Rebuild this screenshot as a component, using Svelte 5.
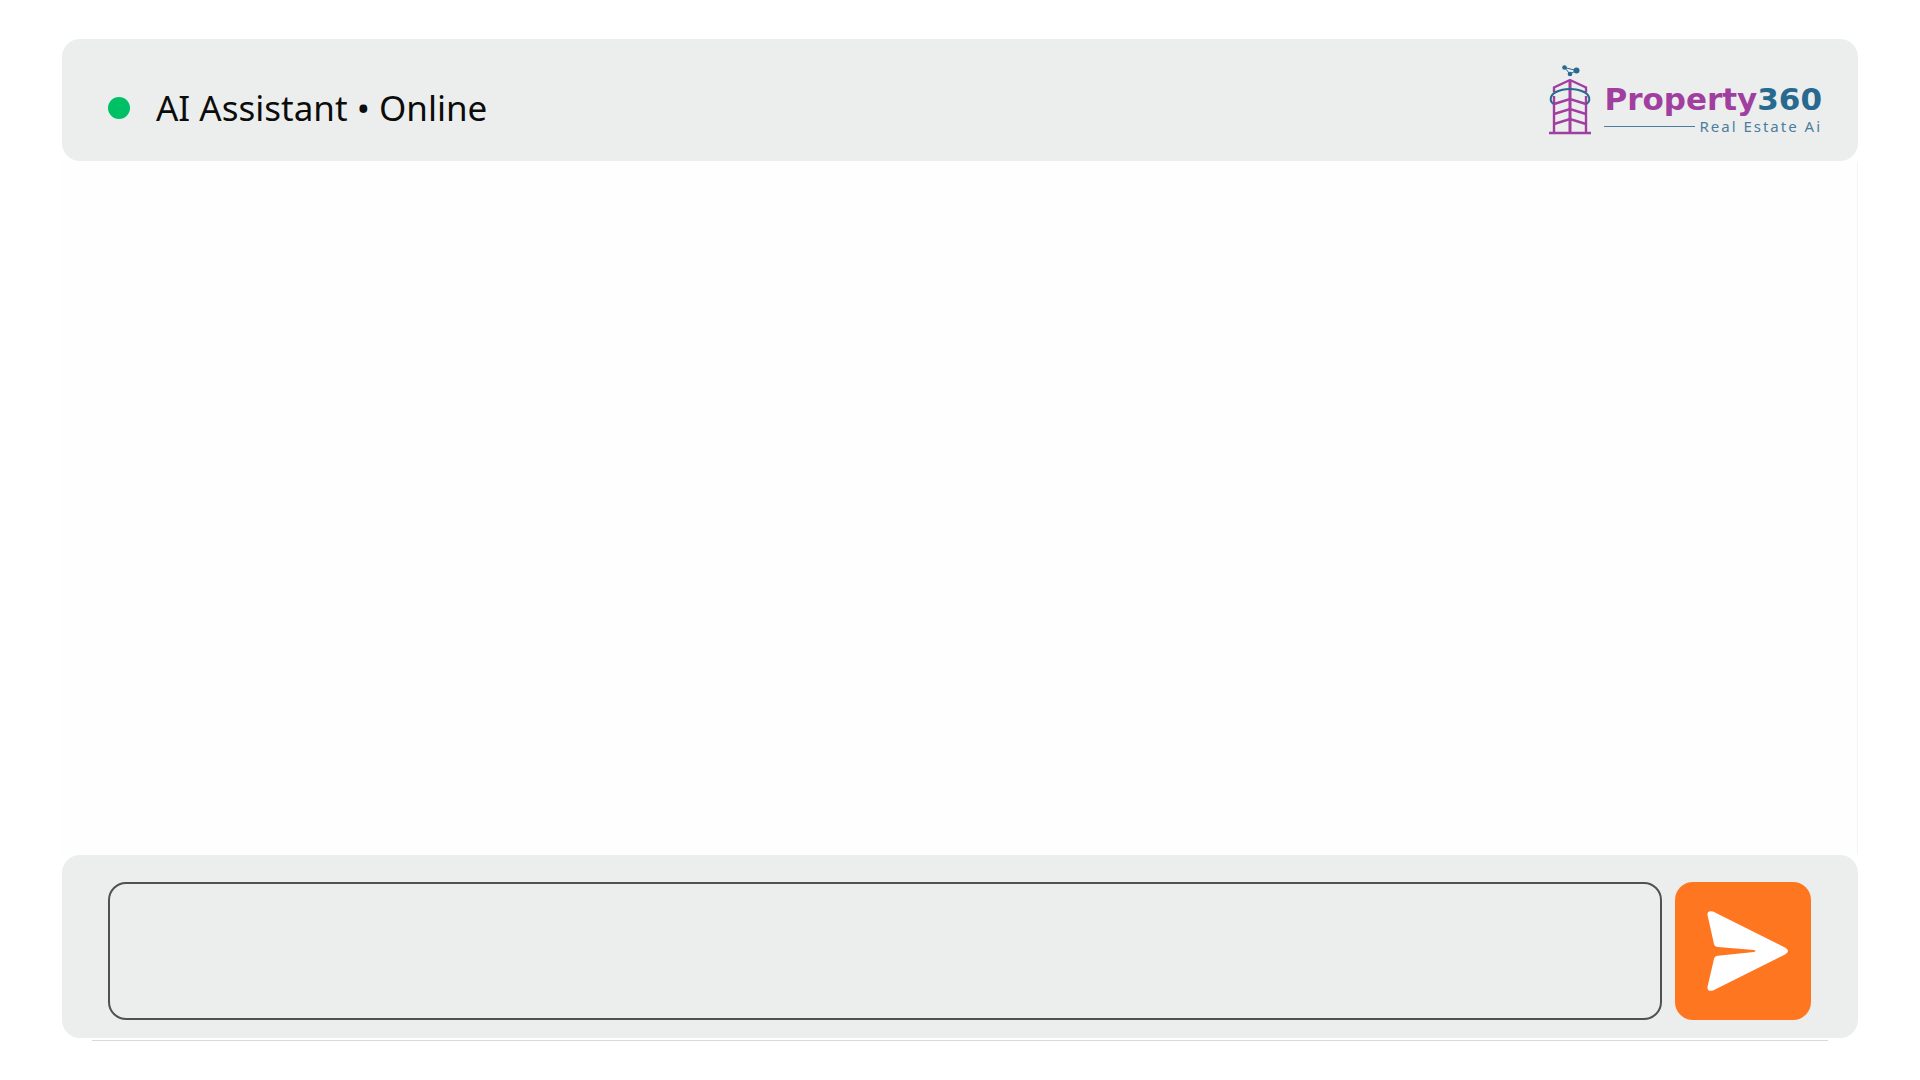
<script lang="ts">
  let message = $state('');

  function send(event: SubmitEvent) {
    event.preventDefault();
    message = '';
  }
</script>

<main class="chat">
  <header class="chat-header">
    <div class="status">
      <span class="status-dot"></span>
      <h1 class="status-text">AI Assistant • Online</h1>
    </div>

    <div class="brand">
      <svg class="brand-icon" viewBox="0 0 44 72" fill="none">
        <g stroke="#a03fa0" stroke-width="2.400">
          <path d="M1 69h42" />
          <path d="M6 69V32M38 69V32" />
          <path d="M6 28V23.500L22 16L38 23.500V28" />
          <path d="M22 16V69" stroke-width="3" />
          <path d="M6 40L22 35L38 40M6 50L22 45L38 50M6 60L22 55L38 60" />
        </g>
        <path
          d="M5.500 40C1 37 2 31 8 28C16 24 28 24 36 28C42 31 43 37 38.500 40"
          stroke="#27698f"
          stroke-width="2"
        />
        <path d="M16.500 3.500L28.500 6.500L22 10Z" stroke="#27698f" />
        <g fill="#27698f">
          <circle cx="16.500" cy="3.500" r="2.300" />
          <circle cx="28.500" cy="6.500" r="3" />
          <circle cx="22" cy="10" r="2.300" />
        </g>
      </svg>
      <div class="brand-text">
        <span class="brand-name">Property<span class="brand-number">360</span></span>
        <span class="brand-tagline">Real Estate Ai</span>
      </div>
    </div>
  </header>

  <section class="messages" aria-label="Messages"></section>

  <form class="composer" onsubmit={send}>
    <input class="composer-input" type="text" aria-label="Message" bind:value={message} />
    <button class="send-btn" type="submit" aria-label="Send">
      <svg class="send-icon" viewBox="0 0 82 82" fill="#fff">
        <path
          d="M6 1.500L78 37.500Q84 41 78 44.500L6 80.500Q0 82 .5 77L7 49Q7.500 46 11 45.800L47 42Q50 41 47 40L11 37Q7.500 36.500 7 34L.5 5Q0 0 6 1.500Z"
        />
      </svg>
    </button>
  </form>
  <div class="chat-edge"></div>
</main>

<style>
  :global(body) {
    background: #fff;
  }
  .chat {
    box-sizing: border-box;
    min-height: 100vh;
    padding: 39px 62px;
    display: flex;
    flex-direction: column;
    font-family: 'Noto Sans', 'Open Sans', sans-serif;
  }

  .chat-header {
    box-sizing: border-box;
    min-height: 122px;
    padding: 24px 36px 24px 46px;
    display: flex;
    align-items: center;
    justify-content: space-between;
    background: #eceeed;
    border-radius: 18px;
  }
  .status {
    display: flex;
    align-items: center;
    gap: 26px;
    padding-top: 16px;
  }
  .status-dot {
    width: 22px;
    height: 22px;
    flex-shrink: 0;
    border-radius: 50%;
    background: #00c065;
  }
  .status-text {
    margin: 0;
    color: #0c0c0c;
    font-size: 35px;
    font-weight: 400;
    line-height: 48px;
  }

  /* Logo */
  .brand {
    display: flex;
    align-items: center;
    gap: 12px;
  }
  .brand-icon {
    width: 44px;
    height: 72px;
  }
  .brand-text {
    display: flex;
    flex-direction: column;
    padding-top: 18px;
  }
  .brand-name {
    color: #a03fa0;
    font-family: 'DejaVu Sans', sans-serif;
    font-size: 31px;
    font-weight: 700;
    line-height: 34px;
  }
  .brand-number {
    color: #27698f;
  }
  .brand-tagline {
    display: flex;
    align-items: center;
    gap: 4px;
    color: #4b7d9d;
    font-size: 15px;
    line-height: 20px;
    letter-spacing: 2px;
    white-space: nowrap;
  }
  .brand-tagline::before {
    content: '';
    flex: 1;
    height: 1px;
    background: #4b7d9d;
  }

  .messages {
    flex: 1;
    background: #fefefe;
    border-right: 1px solid #f3f3f4;
  }

  .composer {
    padding: 27px 47px 18px 46px;
    display: flex;
    gap: 13px;
    background: #eceeed;
    border-radius: 18px;
  }
  .composer-input {
    box-sizing: border-box;
    flex: 1;
    min-width: 0;
    height: 138px;
    padding: 0 28px;
    border: 2px solid #505251;
    border-radius: 18px;
    background: transparent;
    color: #0c0c0c;
    font: inherit;
    font-size: 35px;
  }
  .send-btn {
    display: flex;
    align-items: center;
    justify-content: center;
    width: 136px;
    height: 138px;
    padding: 0;
    padding-left: 10px;
    border: none;
    border-radius: 18px;
    background: #ff7621;
    cursor: pointer;
  }
  .send-icon {
    width: 82px;
    height: 82px;
  }
  .chat-edge {
    height: 1px;
    margin: 2px 30px 0;
    background: #d8dada;
  }
</style>
